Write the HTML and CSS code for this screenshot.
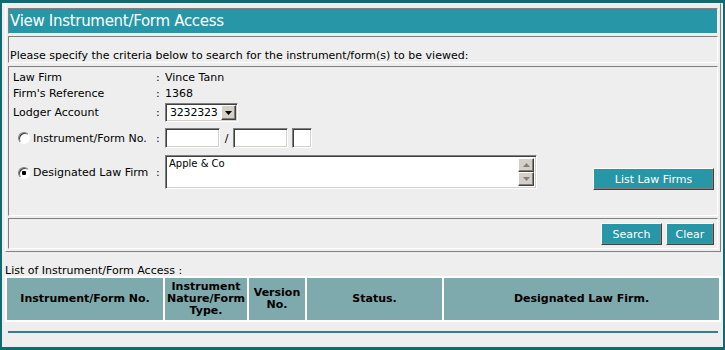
FILE: index.html
```html
<!DOCTYPE html>
<html lang="en">
<head>
  <meta charset="UTF-8">
  <title>View Instrument/Form Access</title>
  <link rel="stylesheet" href="styles.css">
</head>
<body>
  <div class="page">

    <div class="panel">
      <div class="title-bar">View Instrument/Form Access</div>

      <div class="box intro">Please specify the criteria below to search for the instrument/form(s) to be viewed:</div>

      <div class="box criteria">
        <div class="row line">
          <span class="label">Law Firm</span><span class="colon">:</span><span class="value">Vince Tann</span>
        </div>
        <div class="row line">
          <span class="label">Firm's Reference</span><span class="colon">:</span><span class="value">1368</span>
        </div>
        <div class="row lodger">
          <span class="label">Lodger Account</span><span class="colon">:</span>
          <span class="select">
            <span class="select-text">3232323</span>
            <span class="select-btn">
              <svg width="7" height="4" viewBox="0 0 7 4"><path d="M0 0h7L3.5 4z" fill="#000"/></svg>
            </span>
          </span>
        </div>
        <div class="row instr">
          <label class="label"><input type="radio" name="by" class="radio">Instrument/Form No.</label><span class="colon">:</span>
          <input type="text" class="field w55">
          <span class="slash">/</span>
          <input type="text" class="field w55">
          <input type="text" class="field w20">
        </div>
        <div class="row firm">
          <label class="label"><input type="radio" name="by" class="radio" checked>Designated Law Firm</label><span class="colon">:</span>
          <div class="memo">
            <div class="memo-text">Apple &amp; Co</div>
            <div class="scroll">
              <span class="scroll-btn">
                <svg width="7" height="4" viewBox="0 0 7 4"><path d="M3.5 0L7 4H0z" fill="#808080"/></svg>
              </span>
              <span class="scroll-btn">
                <svg width="7" height="4" viewBox="0 0 7 4"><path d="M0 0h7L3.5 4z" fill="#808080"/></svg>
              </span>
            </div>
          </div>
          <button class="btn list-btn">List Law Firms</button>
        </div>
      </div>

      <div class="box actions">
        <button class="btn search-btn">Search</button>
        <button class="btn clear-btn">Clear</button>
      </div>
    </div>

    <div class="list-caption">List of Instrument/Form Access :</div>
    <table class="results">
      <colgroup>
        <col style="width:156px">
        <col style="width:82px">
        <col style="width:56px">
        <col style="width:135px">
        <col style="width:275px">
      </colgroup>
      <tr>
        <th>Instrument/Form No.</th>
        <th>Instrument<br>Nature/Form<br>Type.</th>
        <th>Version<br>No.</th>
        <th>Status.</th>
        <th>Designated Law Firm.</th>
      </tr>
    </table>
    <div class="rule"></div>

  </div>
</body>
</html>
```

FILE: styles.css
```css
* {
  box-sizing: border-box;
}

body {
  margin: 0;
  background-color: #0f6a72;
  font-family: 'DejaVu Sans', Verdana, sans-serif;
  font-size: 11px;
  color: #000;
}

.page {
  margin: 3px 2px;
  height: 344px;
  padding: 0 2px 0 3px;
  background-color: #eeeeee;
  overflow: hidden;
}

/* raised outer panel */
.panel {
  border: 1px solid;
  border-color: #fff #808080 #808080 #fff;
  padding: 4px 2px 2px 2px;
}

/* sunken boxes */
.title-bar,
.box {
  border: 1px solid;
  border-color: #808080 #fff #fff #808080;
}

.title-bar {
  height: 26px;
  padding-left: 1px;
  background-color: #2796a6;
  color: #fff;
  font-size: 15px;
  letter-spacing: -0.3px;
  line-height: 24px;
}

.intro {
  margin-top: 2px;
  height: 27px;
  padding: 13px 0 0 1px;
  line-height: 12px;
  white-space: nowrap;
}

.criteria {
  margin-top: 3px;
  height: 150px;
  padding: 2px 3px 0 4px;
}

.row {
  display: flex;
  align-items: center;
}

.line {
  height: 16px;
}

.label {
  display: flex;
  align-items: center;
  width: 143px;
  white-space: nowrap;
}

.colon {
  width: 9px;
}

.lodger {
  margin-top: 2px;
  height: 19px;
}

.select {
  display: flex;
  align-items: center;
  width: 73px;
  height: 19px;
  border: 1px solid;
  border-color: #808080 #fff #fff #808080;
  box-shadow: inset 1px 1px #404040, inset -1px -1px #d4d0c8;
  background-color: #fff;
  padding: 2px 1px 2px 2px;
}

.select-text {
  flex: 1;
  padding-left: 2px;
  font-size: 11px;
  letter-spacing: -0.2px;
}

.select-btn {
  display: flex;
  align-items: center;
  justify-content: center;
  width: 15px;
  height: 15px;
  background-color: #d4d0c8;
  border: 1px solid;
  border-color: #fff #404040 #404040 #fff;
  box-shadow: inset -1px -1px #808080;
}

.instr {
  margin-top: 6px;
  height: 20px;
}

.radio {
  appearance: none;
  flex: none;
  width: 12px;
  height: 12px;
  margin: 0 3px 0 5px;
  border-radius: 50%;
  border: 1px solid;
  border-color: #808080 #fff #fff #808080;
  box-shadow: inset 1px 1px #404040;
  background-color: #fff;
}

.radio:checked {
  background: radial-gradient(circle, #000 0, #000 2px, #fff 2.5px);
}

.field {
  height: 20px;
  margin: 0;
  border: 1px solid;
  border-color: #808080 #fff #fff #808080;
  box-shadow: inset 1px 1px #404040, inset -1px -1px #d4d0c8;
  background-color: #fff;
  padding: 0 2px;
  font: inherit;
}

.w55 {
  width: 55px;
}

.w20 {
  width: 20px;
  margin-left: 4px;
}

.slash {
  width: 13px;
  text-align: center;
}

.firm {
  margin-top: 7px;
  align-items: flex-start;
}

.firm .label,
.firm .colon {
  margin-top: 11px;
}

.memo {
  display: flex;
  width: 372px;
  height: 34px;
  border: 1px solid;
  border-color: #808080 #fff #fff #808080;
  box-shadow: inset 1px 1px #404040, inset -1px -1px #d4d0c8;
  background-color: #fff;
  padding: 2px;
}

.memo-text {
  flex: 1;
  padding-left: 1px;
  font-size: 10px;
  line-height: 12px;
}

.scroll {
  display: flex;
  flex-direction: column;
  width: 16px;
}

.scroll-btn {
  display: flex;
  align-items: center;
  justify-content: center;
  height: 15px;
  background-color: #d4d0c8;
  border: 1px solid;
  border-color: #fff #404040 #404040 #fff;
  box-shadow: inset -1px -1px #808080;
}

.btn {
  height: 22px;
  padding: 0;
  border: 1px solid;
  border-color: #fff #404040 #404040 #fff;
  box-shadow: inset -1px -1px #808080;
  background-color: #2796a6;
  color: #fff;
  font-family: 'DejaVu Sans', Verdana, sans-serif;
  font-size: 11px;
}

.list-btn {
  width: 121px;
  margin: 13px 0 0 auto;
}

.actions {
  margin-top: 2px;
  height: 31px;
  display: flex;
  justify-content: flex-end;
  gap: 4px;
  padding: 4px 3px 0 0;
}

.search-btn {
  width: 61px;
}

.clear-btn {
  width: 48px;
}

.list-caption {
  margin-top: 13px;
  height: 11px;
  line-height: 11px;
  white-space: nowrap;
}

.results {
  width: 716px;
  table-layout: fixed;
  border-spacing: 2px;
  background-color: #fff;
}

.results th {
  height: 42px;
  padding: 0;
  background-color: #7eaaad;
  font-size: 11px;
  line-height: 12px;
  font-weight: bold;
  text-align: center;
}

.rule {
  height: 2px;
  margin: 9px 3px 0 3px;
  background-color: #3b7b89;
}
```
